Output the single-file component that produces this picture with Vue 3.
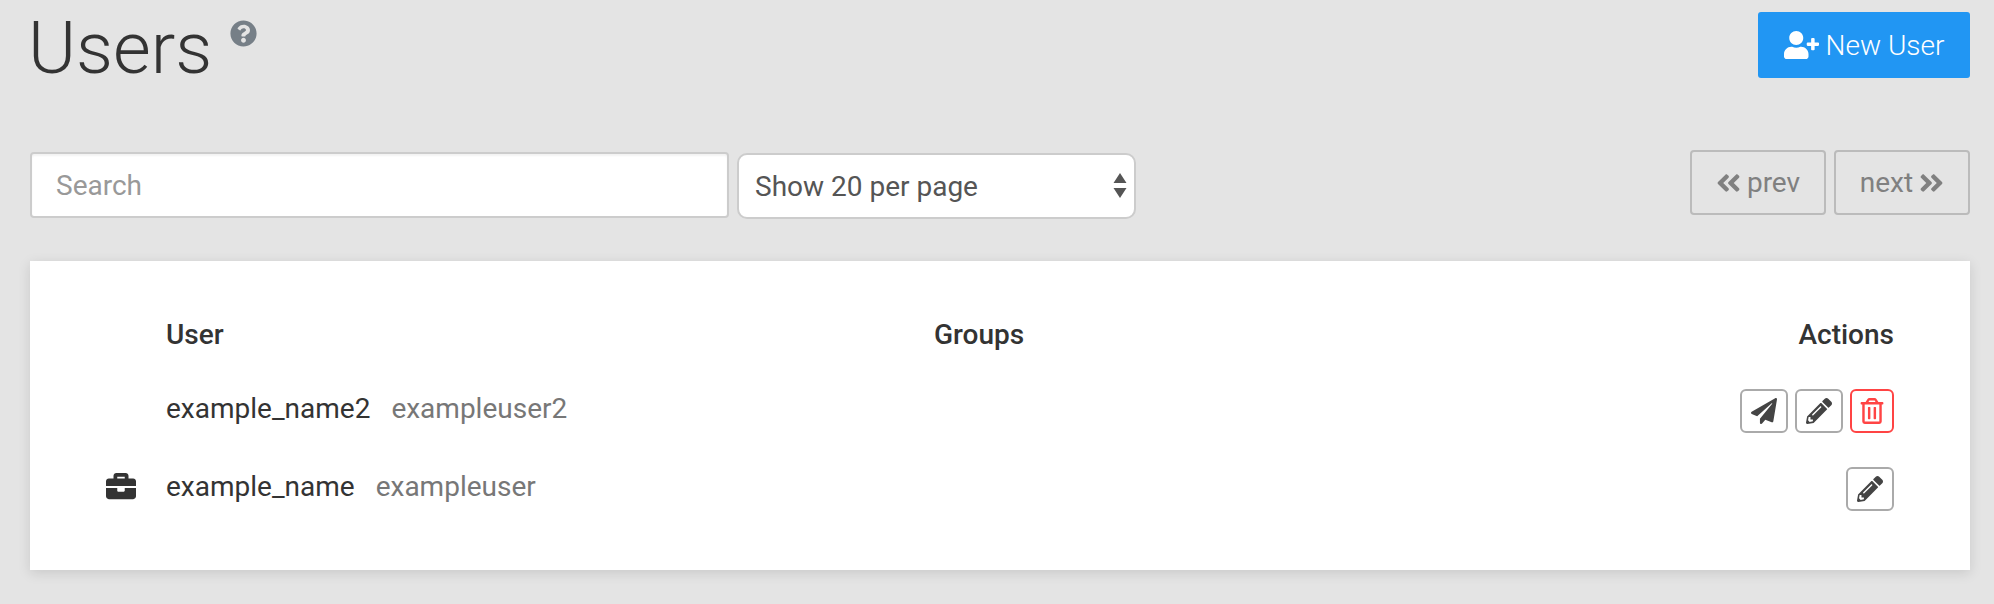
<script setup>
const users = [
  { name: 'example_name2', login: 'exampleuser2', admin: false, invite: true, remove: true },
  { name: 'example_name', login: 'exampleuser', admin: true, invite: false, remove: false }
];
</script>

<template>
  <div class="page">
    <header class="top">
      <h1 class="title">
        Users
        <svg class="help" viewBox="0 0 512 512"><path fill="currentColor" d="M504 256c0 136.997-111.043 248-248 248S8 392.997 8 256C8 119.083 119.043 8 256 8s248 111.083 248 248zM262.655 90c-54.497 0-89.255 22.957-116.549 63.758-3.536 5.286-2.353 12.415 2.715 16.258l34.699 26.31c5.205 3.947 12.621 3.008 16.665-2.122 17.864-22.658 30.113-35.797 57.303-35.797 20.429 0 45.698 13.148 45.698 32.958 0 14.976-12.363 22.667-32.534 33.976C247.128 238.528 216 254.941 216 296v4c0 6.627 5.373 12 12 12h56c6.627 0 12-5.373 12-12v-1.333c0-28.462 83.186-29.647 83.186-106.667 0-58.002-60.165-102-116.531-102zM256 338c-25.365 0-46 20.635-46 46 0 25.364 20.635 46 46 46s46-20.636 46-46c0-25.365-20.635-46-46-46z"/></svg>
      </h1>
      <button class="new-btn">
        <svg class="new-icon" viewBox="0 0 640 512"><path fill="currentColor" d="M624 208h-64v-64c0-8.8-7.2-16-16-16h-32c-8.8 0-16 7.2-16 16v64h-64c-8.8 0-16 7.2-16 16v32c0 8.8 7.2 16 16 16h64v64c0 8.8 7.2 16 16 16h32c8.8 0 16-7.2 16-16v-64h64c8.8 0 16-7.2 16-16v-32c0-8.8-7.2-16-16-16zm-400 48c70.7 0 128-57.3 128-128S294.7 0 224 0 96 57.3 96 128s57.3 128 128 128zm89.6 32h-16.7c-22.2 10.2-46.9 16-72.9 16s-50.6-5.8-72.9-16h-16.7C60.2 288 0 348.2 0 422.4V464c0 26.5 21.5 48 48 48h352c26.5 0 48-21.5 48-48v-41.6c0-74.2-60.2-134.4-134.4-134.4z"/></svg>
        New User
      </button>
    </header>

    <div class="filters">
      <input class="search" type="text" placeholder="Search">
      <div class="select-wrap">
        <select class="per-page">
          <option>Show 20 per page</option>
          <option>Show 50 per page</option>
        </select>
        <svg class="arrows" viewBox="0 0 14 26"><path fill="currentColor" d="M7 0l6.5 10H.5zM.5 15h13L7 25z"/></svg>
      </div>
      <div class="pager">
        <button class="page-btn">
          <svg class="chev" viewBox="0 0 448 512"><path fill="currentColor" d="M223.7 239l136-136c9.4-9.4 24.6-9.4 33.9 0l22.6 22.6c9.4 9.4 9.4 24.6 0 33.9L319.9 256l96.4 96.4c9.4 9.4 9.4 24.6 0 33.9L393.7 409c-9.4 9.4-24.6 9.4-33.9 0l-136-136c-9.5-9.4-9.5-24.6-.1-34zm-192 34l136 136c9.4 9.4 24.6 9.4 33.9 0l22.6-22.6c9.4-9.4 9.4-24.6 0-33.9L127.9 256l96.4-96.4c9.4-9.4 9.4-24.6 0-33.9L201.7 103c-9.4-9.4-24.6-9.4-33.9 0l-136 136c-9.5 9.4-9.5 24.6-.1 34z"/></svg>
          prev
        </button>
        <button class="page-btn">
          next
          <svg class="chev" viewBox="0 0 448 512"><path fill="currentColor" d="M224.3 273l-136 136c-9.4 9.4-24.6 9.4-33.9 0l-22.6-22.6c-9.4-9.4-9.4-24.6 0-33.9l96.4-96.4-96.4-96.4c-9.4-9.4-9.4-24.6 0-33.9L54.3 103c9.4-9.4 24.6-9.4 33.9 0l136 136c9.5 9.4 9.5 24.6.1 34zm192-34l-136-136c-9.4-9.4-24.6-9.4-33.9 0l-22.6 22.6c-9.4 9.4-9.4 24.6 0 33.9l96.4 96.4-96.4 96.4c-9.4 9.4-9.4 24.6 0 33.9l22.6 22.6c9.4 9.4 24.6 9.4 33.9 0l136-136c9.4-9.2 9.4-24.4 0-33.8z"/></svg>
        </button>
      </div>
    </div>

    <div class="card">
      <table class="users">
        <thead>
          <tr>
            <th class="col-icon"></th>
            <th class="col-user">User</th>
            <th class="col-groups">Groups</th>
            <th class="col-actions">Actions</th>
          </tr>
        </thead>
        <tbody>
          <tr v-for="u in users" :key="u.login">
            <td class="col-icon">
              <svg v-if="u.admin" class="case" viewBox="0 0 512 512"><path fill="currentColor" d="M320 336c0 8.84-7.16 16-16 16h-96c-8.84 0-16-7.16-16-16v-48H0v144c0 25.6 22.4 48 48 48h416c25.6 0 48-22.4 48-48V288H320v48zm144-208h-80V80c0-25.6-22.4-48-48-48H176c-25.6 0-48 22.4-48 48v48H48c-25.6 0-48 22.4-48 48v80h512v-80c0-25.6-22.4-48-48-48zm-144 0H192V96h128v32z"/></svg>
            </td>
            <td>
              <span class="name">{{ u.name }}</span>
              <span class="login">{{ u.login }}</span>
            </td>
            <td></td>
            <td>
              <div class="actions">
                <button v-if="u.invite" class="act">
                  <svg viewBox="0 0 512 512"><path fill="currentColor" d="M476 3.2L12.5 270.6c-18.1 10.4-15.8 35.6 2.2 43.2L121 358.4l287.3-253.2c5.5-4.9 13.3 2.6 8.6 8.3L176 407v80.5c0 23.6 28.5 32.9 42.5 15.8L282 426l124.6 52.2c14.2 6 30.4-2.9 33-18.2l72-432C515 7.8 493.3-6.8 476 3.2z"/></svg>
                </button>
                <button class="act">
                  <svg viewBox="0 0 512 512"><path fill="currentColor" d="M497.9 142.1l-46.1 46.1c-4.7 4.7-12.3 4.7-17 0l-111-111c-4.7-4.7-4.7-12.3 0-17l46.1-46.1c18.7-18.7 49.1-18.7 67.9 0l60.1 60.1c18.8 18.7 18.8 49.1 0 67.9zM284.2 99.8L21.6 362.4.4 483.9c-2.9 16.4 11.4 30.6 27.8 27.8l121.5-21.3 262.6-262.6c4.7-4.7 4.7-12.3 0-17l-111-111c-4.8-4.7-12.4-4.7-17.1 0zM124.1 339.9c-5.5-5.5-5.5-14.3 0-19.8l154-154c5.5-5.5 14.3-5.5 19.8 0s5.5 14.3 0 19.8l-154 154c-5.5 5.5-14.3 5.5-19.8 0zM88 424h48v36.3l-64.5 11.3-31.1-31.1L51.7 376H88v48z"/></svg>
                </button>
                <button v-if="u.remove" class="act danger">
                  <svg viewBox="0 0 448 512"><path fill="currentColor" d="M268 416h24a12 12 0 0 0 12-12V188a12 12 0 0 0-12-12h-24a12 12 0 0 0-12 12v216a12 12 0 0 0 12 12zM432 80h-82.41l-34-56.7A48 48 0 0 0 274.41 0H173.59a48 48 0 0 0-41.16 23.3L98.41 80H16A16 16 0 0 0 0 96v16a16 16 0 0 0 16 16h16v336a48 48 0 0 0 48 48h288a48 48 0 0 0 48-48V128h16a16 16 0 0 0 16-16V96a16 16 0 0 0-16-16zM171.84 50.91A6 6 0 0 1 177 48h94a6 6 0 0 1 5.15 2.91L293.61 80H154.39zM368 464H80V128h288zm-212-48h24a12 12 0 0 0 12-12V188a12 12 0 0 0-12-12h-24a12 12 0 0 0-12 12v216a12 12 0 0 0 12 12z"/></svg>
                </button>
              </div>
            </td>
          </tr>
        </tbody>
      </table>
    </div>
  </div>
</template>

<style>
html, body { background: #e4e4e4; }
</style>

<style scoped>
.page {
  width: 1994px;
  height: 604px;
  box-sizing: border-box;
  padding: 12px 24px 0 30px;
  font-family: Roboto, "Liberation Sans", sans-serif;
  color: #333;
  overflow: hidden;
}

.top { display: flex; justify-content: space-between; align-items: flex-start; height: 140px; }
.title {
  margin: 0 0 0 -2px;
  font-size: 73px;
  line-height: 72px;
  font-weight: 300;
  color: #333;
  display: flex;
  align-items: flex-start;
}
.help { width: 27px; height: 27px; margin: 8px 0 0 18px; color: #767f87; }

.new-btn {
  display: flex;
  align-items: center;
  justify-content: center;
  gap: 7px;
  width: 212px;
  height: 66px;
  border: none;
  border-radius: 3px;
  background: #2196f3;
  color: #fff;
  font-family: inherit;
  font-size: 28px;
  font-weight: 300;
}
.new-icon { width: 35px; height: 28px; }

.filters { display: flex; align-items: flex-start; height: 109px; }
.search {
  width: 699px;
  height: 66px;
  box-sizing: border-box;
  border: 2px solid #ccc;
  border-radius: 4px;
  background: #fff;
  box-shadow: inset 0 2px 2px rgba(0, 0, 0, 0.05);
  padding: 0 24px;
  font-family: inherit;
  font-size: 28px;
  outline: none;
}
.search::placeholder { color: #999; }

.select-wrap { position: relative; margin: 1px 0 0 8px; width: 399px; height: 66px; }
.per-page {
  appearance: none;
  width: 100%;
  height: 100%;
  box-sizing: border-box;
  border: 2px solid #ccc;
  border-radius: 10px;
  background: #fff;
  padding: 0 16px;
  font-family: inherit;
  font-size: 28px;
  color: #555;
  outline: none;
}
.arrows { position: absolute; right: 9px; top: 20px; width: 14px; height: 26px; color: #555; pointer-events: none; }

.pager { margin-left: auto; display: flex; gap: 8px; margin-top: -2px; }
.page-btn {
  display: flex;
  align-items: center;
  justify-content: center;
  gap: 6px;
  width: 136px;
  height: 65px;
  border: 2px solid #bbb;
  border-radius: 4px;
  background: transparent;
  color: #808080;
  font-family: inherit;
  font-size: 28px;
}
.chev { width: 25px; height: 28px; }

.card {
  background: #fff;
  height: 309px;
  box-sizing: border-box;
  padding: 39px 76px 0 46px;
  box-shadow: 0 3px 12px rgba(0, 0, 0, 0.12);
}

.users { width: 100%; table-layout: fixed; border-collapse: collapse; font-size: 28px; }
.users th { height: 69px; padding: 0; font-weight: 500; text-align: left; color: #333; }
.users td { height: 78px; padding: 0; vertical-align: middle; color: #333; }
.col-icon { width: 90px; }
.col-user { width: 768px; }
.col-actions { text-align: right !important; }

.case { display: block; width: 30px; height: 30px; margin-left: 30px; color: #333; }
.name { margin-right: 21px; }
.login { color: #777; }

.actions { display: flex; justify-content: flex-end; gap: 7px; margin-top: 6px; }
.act {
  display: flex;
  align-items: center;
  justify-content: center;
  width: 48px;
  height: 44px;
  padding: 0;
  border: 2px solid #aaa;
  border-radius: 6px;
  background: #fff;
  color: #444;
}
.act svg { width: 26px; height: 26px; }
.act.danger { border-color: #f44; color: #f44; width: 44px; }
</style>
